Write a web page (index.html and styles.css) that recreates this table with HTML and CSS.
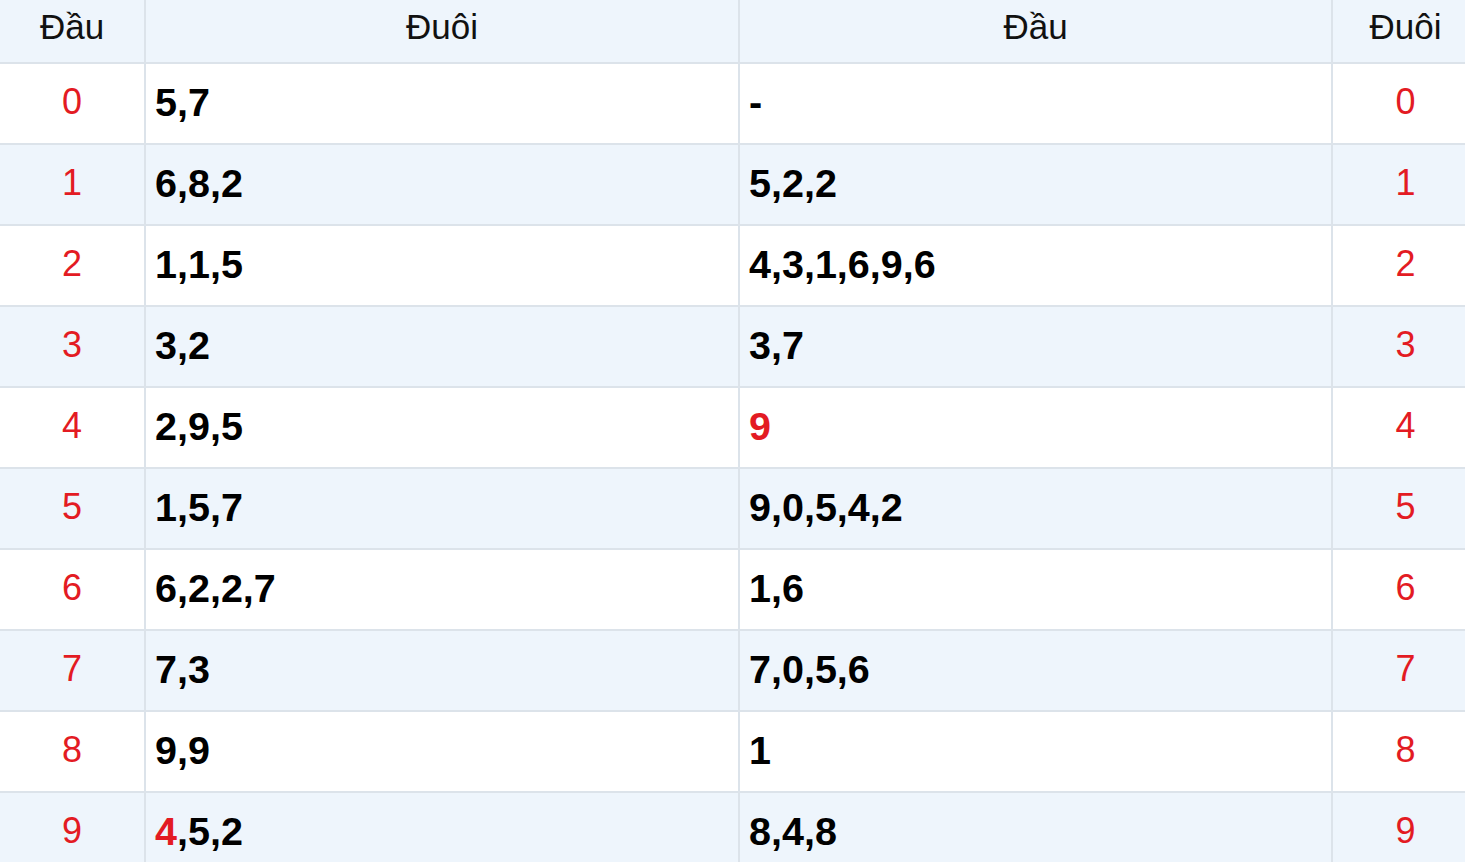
FILE: index.html
```html
<!DOCTYPE html>
<html lang="vi">
<head>
<meta charset="utf-8">
<title>Loto</title>
<link rel="stylesheet" href="styles.css">
</head>
<body>
<div class="loto">
  <div class="row head">
    <div class="cell c1">Đầu</div>
    <div class="cell c2">Đuôi</div>
    <div class="cell c3">Đầu</div>
    <div class="cell c4">Đuôi</div>
  </div>
  <div class="row">
    <div class="cell c1 red">0</div>
    <div class="cell c2 nums">5,7</div>
    <div class="cell c3 nums">-</div>
    <div class="cell c4 red">0</div>
  </div>
  <div class="row alt">
    <div class="cell c1 red">1</div>
    <div class="cell c2 nums">6,8,2</div>
    <div class="cell c3 nums">5,2,2</div>
    <div class="cell c4 red">1</div>
  </div>
  <div class="row">
    <div class="cell c1 red">2</div>
    <div class="cell c2 nums">1,1,5</div>
    <div class="cell c3 nums">4,3,1,6,9,6</div>
    <div class="cell c4 red">2</div>
  </div>
  <div class="row alt">
    <div class="cell c1 red">3</div>
    <div class="cell c2 nums">3,2</div>
    <div class="cell c3 nums">3,7</div>
    <div class="cell c4 red">3</div>
  </div>
  <div class="row">
    <div class="cell c1 red">4</div>
    <div class="cell c2 nums">2,9,5</div>
    <div class="cell c3 nums"><span class="hl">9</span></div>
    <div class="cell c4 red">4</div>
  </div>
  <div class="row alt">
    <div class="cell c1 red">5</div>
    <div class="cell c2 nums">1,5,7</div>
    <div class="cell c3 nums">9,0,5,4,2</div>
    <div class="cell c4 red">5</div>
  </div>
  <div class="row">
    <div class="cell c1 red">6</div>
    <div class="cell c2 nums">6,2,2,7</div>
    <div class="cell c3 nums">1,6</div>
    <div class="cell c4 red">6</div>
  </div>
  <div class="row alt">
    <div class="cell c1 red">7</div>
    <div class="cell c2 nums">7,3</div>
    <div class="cell c3 nums">7,0,5,6</div>
    <div class="cell c4 red">7</div>
  </div>
  <div class="row">
    <div class="cell c1 red">8</div>
    <div class="cell c2 nums">9,9</div>
    <div class="cell c3 nums">1</div>
    <div class="cell c4 red">8</div>
  </div>
  <div class="row alt">
    <div class="cell c1 red">9</div>
    <div class="cell c2 nums"><span class="hl">4</span>,5,2</div>
    <div class="cell c3 nums">8,4,8</div>
    <div class="cell c4 red">9</div>
  </div>
</div>
</body>
</html>
```
FILE: styles.css
```css
html, body {
  margin: 0;
  padding: 0;
  background: #ffffff;
  overflow: hidden;
}

.loto {
  width: 1480px;
  font-family: "Liberation Sans", Arial, sans-serif;
  color: #000;
}

.row {
  display: grid;
  grid-template-columns: 146px 594px 593px 147px;
  height: 81px;
  background: #ffffff;
}

.row.alt,
.row.head {
  background: #eef5fc;
}

.row.head {
  height: 64px;
}

.cell {
  box-sizing: border-box;
  border-right: 2px solid #dce3ea;
  border-bottom: 2px solid #dce3ea;
  display: flex;
  align-items: center;
  padding-bottom: 3px;
  white-space: nowrap;
}

.head .cell {
  justify-content: center;
  font-size: 35px;
  color: #111;
  padding-bottom: 8px;
}

.c1,
.c4 {
  justify-content: center;
}

.red {
  color: #e31b23;
  font-size: 36px;
}

.nums {
  padding-left: 9px;
  font-size: 39.5px;
  font-weight: bold;
}

.hl {
  color: #e31b23;
}
```
